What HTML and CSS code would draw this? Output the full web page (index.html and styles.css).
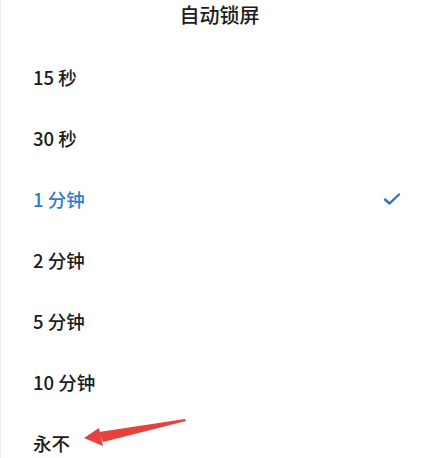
FILE: index.html
```html
<!DOCTYPE html>
<html lang="zh-CN">
<head>
  <meta charset="UTF-8" />
  <meta name="viewport" content="width=device-width, initial-scale=1.0" />
  <title>自动锁屏</title>
  <link rel="stylesheet" href="styles.css">
</head>
<body>
  <div class="sheet">
    <div class="title">自动锁屏</div>
    <ul class="options">
      <li class="option">15 秒</li>
      <li class="option">30 秒</li>
      <li class="option selected">
        <span>1 分钟</span>
        <svg class="check" width="18" height="14" viewBox="0 0 18 14">
          <path d="M2 7.5 L6.5 11.5 L16 2.5" fill="none" stroke="#2f72c0" stroke-width="2.4" stroke-linecap="round" stroke-linejoin="round"/>
        </svg>
      </li>
      <li class="option">2 分钟</li>
      <li class="option">5 分钟</li>
      <li class="option">10 分钟</li>
      <li class="option">永不</li>
    </ul>

    <!-- annotation arrow -->
    <svg class="arrow" width="108" height="34" viewBox="0 0 108 34">
      <path d="M104 3 L105 5 L22 26 L18 16 Z" fill="#e8403c"/>
      <path d="M3 22 L18 12 L22 30 Z" fill="#e8403c"/>
    </svg>
  </div>
</body>
</html>
```

FILE: styles.css
```css
body {
  margin: 0;
  background: #fff;
  font-family: "Noto Sans CJK SC", "Noto Sans", sans-serif;
  color: #1b1b1b;
}
.sheet {
  position: relative;
  width: 438px;
  height: 458px;
  overflow: hidden;
  border-left: 1px solid #ececec;
  box-sizing: border-box;
}
.title {
  height: 46px;
  padding-top: 3px;
  box-sizing: border-box;
  text-align: center;
  font-size: 20px;
  line-height: 24px;
  font-weight: 500;
}
.options {
  list-style: none;
  margin: 0;
  padding: 0;
}
.option {
  height: 61px;
  display: flex;
  align-items: center;
  justify-content: space-between;
  padding: 0 37px 0 32px;
  font-size: 18.5px;
  font-weight: 500;
}
.option.selected {
  color: #2f7ccf;
}
.arrow {
  position: absolute;
  left: 80px;
  top: 416px;
}
```
